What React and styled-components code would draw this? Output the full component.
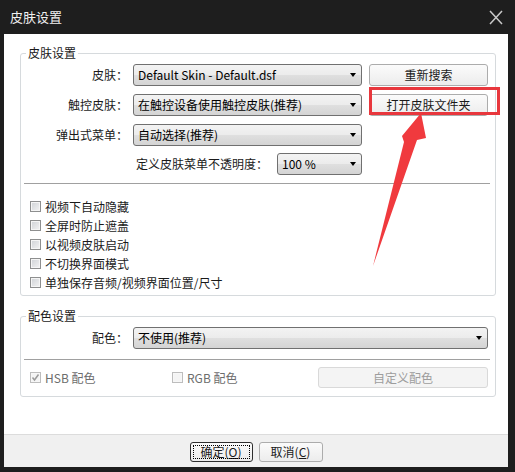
import React from "react";
import styled, { createGlobalStyle } from "styled-components";

const GlobalStyle = createGlobalStyle`
  html, body {
    margin: 0;
    padding: 0;
    background: #1e1e1e;
  }
  body {
    font-family: "Noto Sans CJK SC", sans-serif;
    font-size: 12px;
    color: #1a1a1a;
  }
`;

const Window = styled.div`
  position: relative;
  width: 515px;
  height: 472px;
  box-sizing: border-box;
  padding: 0 7px 5px 4px;
  background: #1e1e1e;
  display: flex;
  flex-direction: column;
`;

const TitleBar = styled.div`
  height: 34px;
  flex: none;
  display: flex;
  align-items: center;
  justify-content: space-between;
  padding: 0 5px 0 6px;
  color: #f0f0f0;
  font-size: 13px;
  line-height: 16px;
`;

const CloseIcon = styled.svg`
  width: 14px;
  height: 15px;
  display: block;
`;

const Client = styled.div`
  flex: 1;
  display: flex;
  flex-direction: column;
  background: #fff;
`;

const Body = styled.div`
  flex: 1;
  padding: 11px 12px 0 16px;
`;

const Group = styled.fieldset`
  margin: ${(p) => p.$top || 0}px 0 0 0;
  padding: 3px 0 ${(p) => p.$bottom || 0}px 0;
  border: 1px solid #d6dadd;
  border-radius: 3px;
  min-width: 0;
`;

const Legend = styled.legend`
  margin-left: 5px;
  padding: 0 2px;
  font-size: 12px;
  line-height: 16px;
  color: #1a1a1a;
`;

const FormGrid = styled.div`
  display: grid;
  grid-template-columns: 107px ${(p) => p.$cols || "229px 121px"};
  column-gap: 5px;
  row-gap: 8px;
  align-items: center;
`;

const FieldLabel = styled.span`
  text-align: right;
  line-height: 16px;
  white-space: nowrap;
`;

const Select = styled.div`
  height: 22px;
  box-sizing: border-box;
  width: ${(p) => (p.$width ? `${p.$width}px` : "auto")};
  border: 1px solid #707070;
  border-radius: 3px;
  background: linear-gradient(#f3f3f3 0%, #ececec 48%, #dfdfdf 52%, #d4d4d4 100%);
  display: flex;
  align-items: center;
  justify-content: space-between;
  padding: 0 5px 0 4px;
  color: #000;
  line-height: 16px;
  white-space: nowrap;
`;

const Caret = styled.span`
  width: 0;
  height: 0;
  border-left: 3px solid transparent;
  border-right: 3px solid transparent;
  border-top: 4px solid #000;
  flex: none;
`;

const Button = styled.button`
  height: ${(p) => p.$height || 22}px;
  width: ${(p) => p.$width || 119}px;
  justify-self: end;
  box-sizing: border-box;
  border: 1px solid ${(p) => (p.$disabled ? "#d9d9d9" : "#acacac")};
  border-radius: 3px;
  background: ${(p) =>
    p.$disabled ? "#f4f4f4" : "linear-gradient(#fbfbfb, #ececec)"};
  color: ${(p) => (p.$disabled ? "#9d9d9d" : "#1a1a1a")};
  font-family: inherit;
  font-size: 12px;
  line-height: 16px;
  padding: 0;
  margin: 0;
`;

const DefaultButton = styled(Button)`
  border-color: #2e2e2e;
  outline: 1px dotted #000;
  outline-offset: -4px;
`;

const OpacityRow = styled.div`
  width: 341px;
  margin-top: 7px;
  display: flex;
  justify-content: flex-end;
  align-items: center;
  gap: 9px;
`;

const Divider = styled.div`
  height: 1px;
  margin: ${(p) => p.$top}px 5px 0 3px;
  background: #a0a0a0;
`;

const CheckList = styled.div`
  padding: 13px 0 3px 9px;
`;

const CheckRow = styled.div`
  height: 19px;
  display: flex;
  align-items: center;
  gap: 4px;
  color: ${(p) => (p.$muted ? "#6d6d6d" : "#1a1a1a")};
  line-height: 16px;
  white-space: nowrap;
`;

const Box = styled.span`
  width: 11px;
  height: 11px;
  box-sizing: border-box;
  flex: none;
  display: flex;
  align-items: center;
  justify-content: center;
  border: 1px solid ${(p) => (p.$muted ? "#bdbdbd" : "#8e8f8f")};
  background: ${(p) =>
    p.$muted ? "#f4f4f4" : "linear-gradient(135deg, #cfd2d6 0%, #f3f3f3 100%)"};
  box-shadow: inset 0 0 0 1px ${(p) => (p.$muted ? "#f7f7f7" : "#f5f5f5")};
`;

const ColorRow = styled.div`
  margin-top: 7px;
  padding-left: 9px;
  display: grid;
  grid-template-columns: 142px 146px 170px;
  align-items: center;
`;

const Footer = styled.div`
  height: 33px;
  flex: none;
  box-sizing: border-box;
  border-top: 1px solid #dcdcdc;
  background: #f0f0f0;
  display: flex;
  justify-content: center;
  gap: 6px;
  padding-top: 7px;
`;

/* annotation layer drawn on top of the dialog */
const Highlight = styled.div`
  position: absolute;
  left: 369px;
  top: 87px;
  width: 131px;
  height: 28px;
  box-sizing: border-box;
  border: 3px solid #e8373d;
`;

const Arrow = styled.svg`
  position: absolute;
  left: 370px;
  top: 110px;
  width: 60px;
  height: 160px;
`;

const Check = ({ label, checked, muted }) => (
  <CheckRow $muted={muted}>
    <Box $muted={muted}>
      {checked && (
        <svg width="9" height="9" viewBox="0 0 9 9">
          <polyline
            points="1.5,4.5 3.5,7 7.5,1.5"
            fill="none"
            stroke="#9a9a9a"
            strokeWidth="1.5"
          />
        </svg>
      )}
    </Box>
    {label}
  </CheckRow>
);

const skinRows = [
  { label: "皮肤：", value: "Default Skin - Default.dsf", action: "重新搜索" },
  { label: "触控皮肤：", value: "在触控设备使用触控皮肤(推荐)", action: "打开皮肤文件夹" },
  { label: "弹出式菜单：", value: "自动选择(推荐)" },
];

const toggles = [
  "视频下自动隐藏",
  "全屏时防止遮盖",
  "以视频皮肤启动",
  "不切换界面模式",
  "单独保存音频/视频界面位置/尺寸",
];

const App = () => {
  return (
    <>
      <GlobalStyle />
      <Window>
        <TitleBar>
          <span>皮肤设置</span>
          <CloseIcon viewBox="0 0 14 15">
            <path d="M1 1 L13 14 M13 1 L1 14" stroke="#c9c9c9" strokeWidth="1.5" />
          </CloseIcon>
        </TitleBar>
        <Client>
          <Body>
            <Group $bottom={0}>
              <Legend>皮肤设置</Legend>
              <FormGrid>
                {skinRows.map((row) => (
                  <React.Fragment key={row.label}>
                    <FieldLabel>{row.label}</FieldLabel>
                    <Select>
                      <span>{row.value}</span>
                      <Caret />
                    </Select>
                    {row.action ? <Button>{row.action}</Button> : <span />}
                  </React.Fragment>
                ))}
              </FormGrid>
              <OpacityRow>
                <FieldLabel>定义皮肤菜单不透明度：</FieldLabel>
                <Select $width={85}>
                  <span>100 %</span>
                  <Caret />
                </Select>
              </OpacityRow>
              <Divider $top={8} />
              <CheckList>
                {toggles.map((t) => (
                  <Check key={t} label={t} />
                ))}
              </CheckList>
            </Group>

            <Group $top={12} $bottom={8}>
              <Legend>配色设置</Legend>
              <FormGrid $cols="355px">
                <FieldLabel>配色：</FieldLabel>
                <Select>
                  <span>不使用(推荐)</span>
                  <Caret />
                </Select>
              </FormGrid>
              <Divider $top={10} />
              <ColorRow>
                <Check label="HSB 配色" checked muted />
                <Check label="RGB 配色" muted />
                <Button $width={170} $height={21} $disabled>
                  自定义配色
                </Button>
              </ColorRow>
            </Group>
          </Body>
          <Footer>
            <DefaultButton $width={63} $height={20}>
              确定(<u>O</u>)
            </DefaultButton>
            <Button $width={64} $height={20}>
              取消(<u>C</u>)
            </Button>
          </Footer>
        </Client>

        <Highlight />
        <Arrow viewBox="0 0 60 160">
          <polygon
            points="51,3 56,28 47,30 3,156 34,32 32,26"
            fill="#f03a3e"
          />
        </Arrow>
      </Window>
    </>
  );
};

export default App;
